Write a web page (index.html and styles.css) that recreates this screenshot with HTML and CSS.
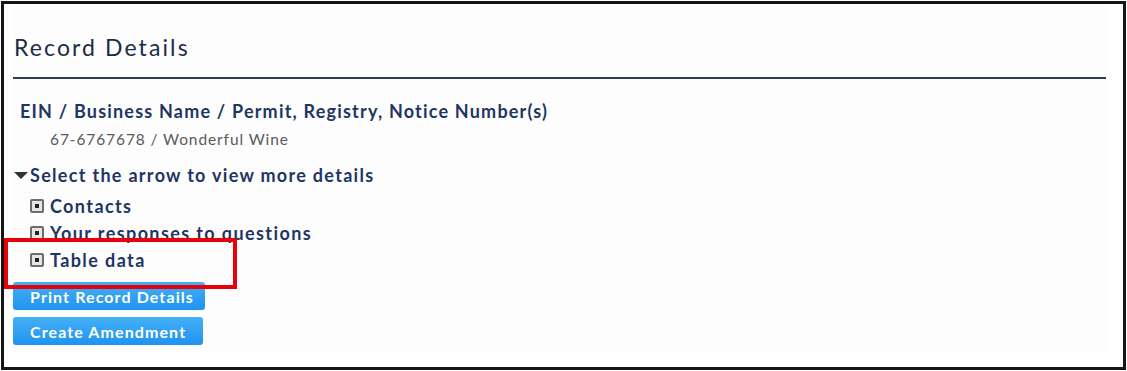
FILE: index.html
```html
<!DOCTYPE html>
<html>
<head>
<meta charset="utf-8">
<link rel="stylesheet" href="styles.css">
</head>
<body>
<div class="frame">
  <div class="panel">
    <h1 class="title">Record Details</h1>
    <div class="rule"></div>
    <div class="field-label">EIN / Business Name / Permit, Registry, Notice Number(s)</div>
    <div class="field-value">67-6767678 / Wonderful Wine</div>
    <div class="toggle"><span class="caret"></span>Select the arrow to view more details</div>
    <ul class="sections">
      <li><span class="plus"></span>Contacts</li>
      <li><span class="plus"></span>Your responses to questions</li>
      <li><span class="plus"></span>Table data</li>
    </ul>
    <div class="actions">
      <button class="btn btn-print">Print Record Details</button>
      <button class="btn btn-amend">Create Amendment</button>
    </div>
  </div>
  <div class="highlight"></div>
</div>
</body>
</html>
```
FILE: styles.css
```css
html, body {
  margin: 0;
  padding: 0;
  background: #ffffff;
}
body {
  padding: 1px;
  font-family: Lato, "Open Sans", sans-serif;
}
.frame {
  position: relative;
  width: 1119px;
  height: 363px;
  border: 3px solid #151515;
  background: #ffffff;
}
.panel {
  margin-left: 9px;
  width: 1093px;
  height: 348px;
  background: #fdfdfd;
  display: flex;
  flex-direction: column;
  align-items: flex-start;
}
.title {
  margin: 0;
  padding: 29px 0 0 1px;
  font-size: 23px;
  font-weight: 400;
  letter-spacing: 2.1px;
  line-height: 28px;
  color: #1c2b45;
}
.rule {
  align-self: stretch;
  height: 2px;
  background: #2f3b52;
  margin-top: 16px;
}
.field-label {
  margin: 21px 0 0 7px;
  font-size: 18px;
  font-weight: 700;
  letter-spacing: 1.2px;
  line-height: 22px;
  color: #1f3562;
}
.field-value {
  margin: 7px 0 0 37px;
  font-size: 15.5px;
  letter-spacing: 0.9px;
  line-height: 20px;
  color: #5a5a5a;
}
.toggle {
  margin: 15px 0 0 0;
  font-size: 18px;
  font-weight: 700;
  letter-spacing: 1.3px;
  line-height: 22px;
  color: #1f3562;
  display: flex;
  align-items: center;
}
.caret {
  width: 0;
  height: 0;
  border-left: 7px solid transparent;
  border-right: 7px solid transparent;
  border-top: 7px solid #333;
  margin: 0 2px 0 1px;
}
.sections {
  list-style: none;
  margin: 6px 0 0 17px;
  padding: 0;
}
.sections li {
  display: flex;
  align-items: center;
  height: 27px;
  font-size: 18px;
  font-weight: 700;
  letter-spacing: 1.4px;
  color: #1f3562;
}
.plus {
  position: relative;
  box-sizing: border-box;
  width: 14px;
  height: 14px;
  border: 2px solid #6d6d6d;
  border-radius: 2px;
  background: #e6e6e6;
  margin-right: 6px;
}
.plus::after {
  content: "";
  position: absolute;
  left: 3px;
  top: 3px;
  width: 4px;
  height: 4px;
  background: #222;
}
.actions {
  display: flex;
  flex-direction: column;
  gap: 7px;
  margin-top: 9px;
}
.btn {
  box-sizing: border-box;
  height: 28px;
  border: none;
  border-radius: 3px;
  background: linear-gradient(#45b0f7, #1e93ef);
  color: #ffffff;
  font-family: Lato, "Open Sans", sans-serif;
  font-size: 16px;
  font-weight: 700;
  letter-spacing: 1.1px;
  padding: 0 0 0 17px;
  text-align: left;
  white-space: nowrap;
}
.btn-print { width: 192px; }
.btn-amend { width: 190px; }
.highlight {
  position: absolute;
  left: 0;
  top: 234px;
  width: 225px;
  height: 43px;
  border: 4px solid #e8000b;
}
```
